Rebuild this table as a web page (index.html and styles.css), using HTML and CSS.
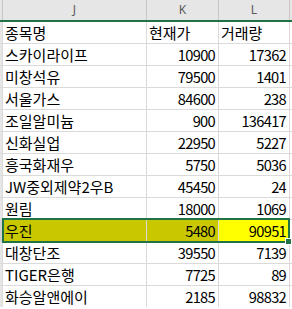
FILE: index.html
```html
<!DOCTYPE html>
<html lang="ko">
<head>
<meta charset="utf-8">
<link rel="stylesheet" href="styles.css">
</head>
<body>
<div class="sheet">
  <div class="head">
    <div class="corner"></div>
    <div class="ch">J</div>
    <div class="ch">K</div>
    <div class="ch">L</div>
    <div class="ch"></div>
  </div>
  <div class="grid">
    <div class="rh"></div><div class="c">종목명</div><div class="c">현재가</div><div class="c">거래량</div><div class="m"></div>
    <div class="rh"></div><div class="c">스카이라이프</div><div class="c n">10900</div><div class="c n">17362</div><div class="m"></div>
    <div class="rh"></div><div class="c">미창석유</div><div class="c n">79500</div><div class="c n">1401</div><div class="m"></div>
    <div class="rh"></div><div class="c">서울가스</div><div class="c n">84600</div><div class="c n">238</div><div class="m"></div>
    <div class="rh"></div><div class="c">조일알미늄</div><div class="c n">900</div><div class="c n">136417</div><div class="m"></div>
    <div class="rh"></div><div class="c">신화실업</div><div class="c n">22950</div><div class="c n">5227</div><div class="m"></div>
    <div class="rh"></div><div class="c">흥국화재우</div><div class="c n">5750</div><div class="c n">5036</div><div class="m"></div>
    <div class="rh"></div><div class="c">JW중외제약2우B</div><div class="c n">45450</div><div class="c n">24</div><div class="m"></div>
    <div class="rh"></div><div class="c">원림</div><div class="c n">18000</div><div class="c n">1069</div><div class="m"></div>
    <div class="rh rh-sel"></div><div class="c hl">우진</div><div class="c n hl">5480</div><div class="c n active">90951</div><div class="m"></div>
    <div class="rh"></div><div class="c">대창단조</div><div class="c n">39550</div><div class="c n">7139</div><div class="m"></div>
    <div class="rh"></div><div class="c">TIGER은행</div><div class="c n">7725</div><div class="c n">89</div><div class="m"></div>
    <div class="rh"></div><div class="c">화승알앤에이</div><div class="c n">2185</div><div class="c n">98832</div><div class="m"></div>
  </div>
  <div class="sel"><span class="handle"></span></div>
</div>
</body>
</html>
```
FILE: styles.css
```css
html, body {
  margin: 0;
  padding: 0;
  background: #ffffff;
}
.sheet {
  position: relative;
  width: 292px;
  height: 309px;
  overflow: hidden;
  font-family: "Noto Sans CJK KR", "Noto Sans", sans-serif;
  color: #000000;
}
.head {
  display: grid;
  grid-template-columns: 2px 143px 71px 70px 2px;
  column-gap: 1px;
  height: 20px;
  background: #c6c6c6;
  border-bottom: 2px solid #217346;
}
.corner, .ch {
  background: #e6e6e6;
}
.ch {
  font-family: "Noto Sans", sans-serif;
  font-size: 12px;
  line-height: 20px;
  text-align: center;
  color: #5a5a5a;
}
.grid {
  display: grid;
  grid-template-columns: 2px 143px 71px 70px 2px;
  grid-auto-rows: 21px;
  gap: 1px;
  background: #dadada;
}
.rh {
  background: #e6e6e6;
}
.rh-sel {
  background: #d2d2d2;
}
.m {
  background: #ffffff;
}
.c {
  background: #ffffff;
  font-size: 15px;
  line-height: 21px;
  padding: 0 2px 0 2px;
  white-space: nowrap;
  overflow: hidden;
}
.n {
  font-size: 14.67px;
  text-align: right;
  letter-spacing: -0.7px;
  padding-right: 3px;
}
.hl {
  background: #c9c800;
}
.active {
  background: #ffff00;
}
.sel {
  position: absolute;
  left: 2px;
  top: 218px;
  width: 288px;
  height: 25px;
  box-sizing: border-box;
  border: 2px solid #217346;
}
.handle {
  position: absolute;
  right: -4px;
  bottom: -4px;
  width: 5px;
  height: 5px;
  background: #217346;
  border: 1px solid #ffffff;
}
```
